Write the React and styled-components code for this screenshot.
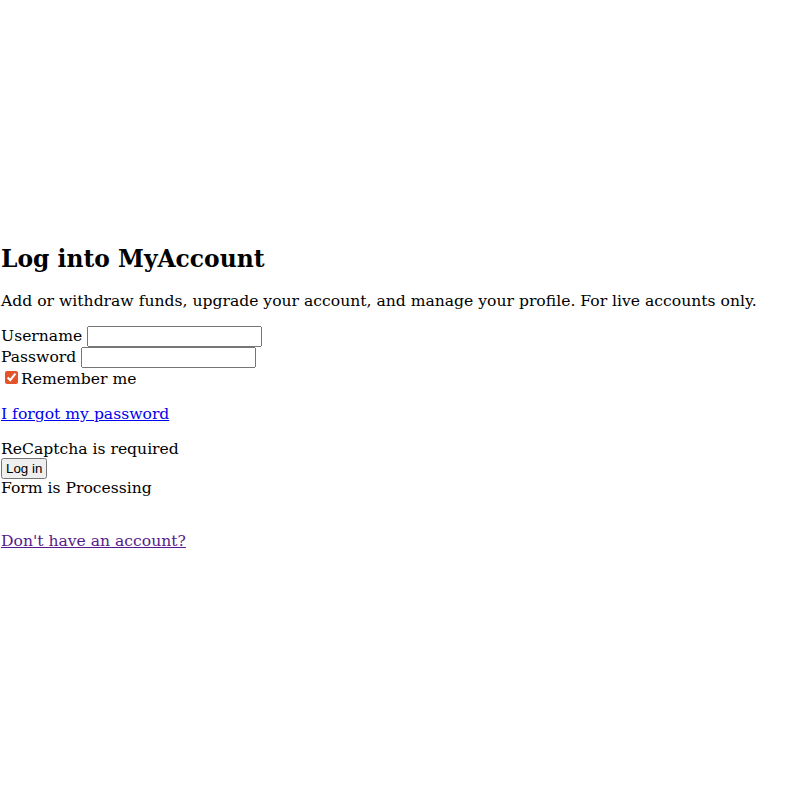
import React from "react";
import styled, { createGlobalStyle } from "styled-components";

const Global = createGlobalStyle`
  html, body { margin: 0; padding: 0; }
  body {
    font-family: "DejaVu Serif", serif;
    font-size: 15.6px;
    line-height: 18.6px;
    color: #000;
    background: #fff;
  }
`;

const Page = styled.main`
  display: flex;
  flex-direction: column;
  justify-content: center;
  min-height: 100vh;
  padding-left: 1px;
  box-sizing: border-box;
`;

const Block = styled.section`
  padding-bottom: 6.4px;
`;

const Title = styled.h2`
  font-size: 23.4px;
  line-height: 27.9px;
  font-weight: bold;
  margin: 19.92px 0 17.5px;
`;

const Para = styled.p`
  margin: 16px 0;
`;

const Form = styled.form`
  margin: 0;
`;

const Row = styled.div``;

const Input = styled.input`
  width: 175px;
  box-sizing: border-box;
`;

const Check = styled.input`
  accent-color: #e5532b;
  margin: 3px 3px 3px 4px;
`;

const Link = styled.a`
  color: ${(p) => (p.$visited ? "#551a8b" : "#0000ee")};
  text-decoration: underline;
  cursor: pointer;
`;

const Button = styled.button`
  padding: 1px 3px;
`;

const BlankLine = styled.div`
  height: 18.6px;
`;

export default function App() {
  return (
    <>
      <Global />
      <Page>
        <Block>
          <Title>Log into MyAccount</Title>
          <Para>
            Add or withdraw funds, upgrade your account, and manage your profile. For live accounts only.
          </Para>
          <Form onSubmit={(e) => e.preventDefault()}>
            <Row>
              <label htmlFor="u">Username </label>
              <Input id="u" type="text" />
            </Row>
            <Row>
              <label htmlFor="p">Password </label>
              <Input id="p" type="password" />
            </Row>
            <Row>
              <Check id="r" type="checkbox" defaultChecked />
              <label htmlFor="r">Remember me</label>
            </Row>
            <Para>
              <Link href="#forgot">I forgot my password</Link>
            </Para>
            <Row>ReCaptcha is required</Row>
            <Button type="submit">Log in</Button>
            <Row>Form is Processing</Row>
          </Form>
          <BlankLine />
          <Para>
            <Link $visited href="#signup">Don't have an account?</Link>
          </Para>
        </Block>
      </Page>
    </>
  );
}
